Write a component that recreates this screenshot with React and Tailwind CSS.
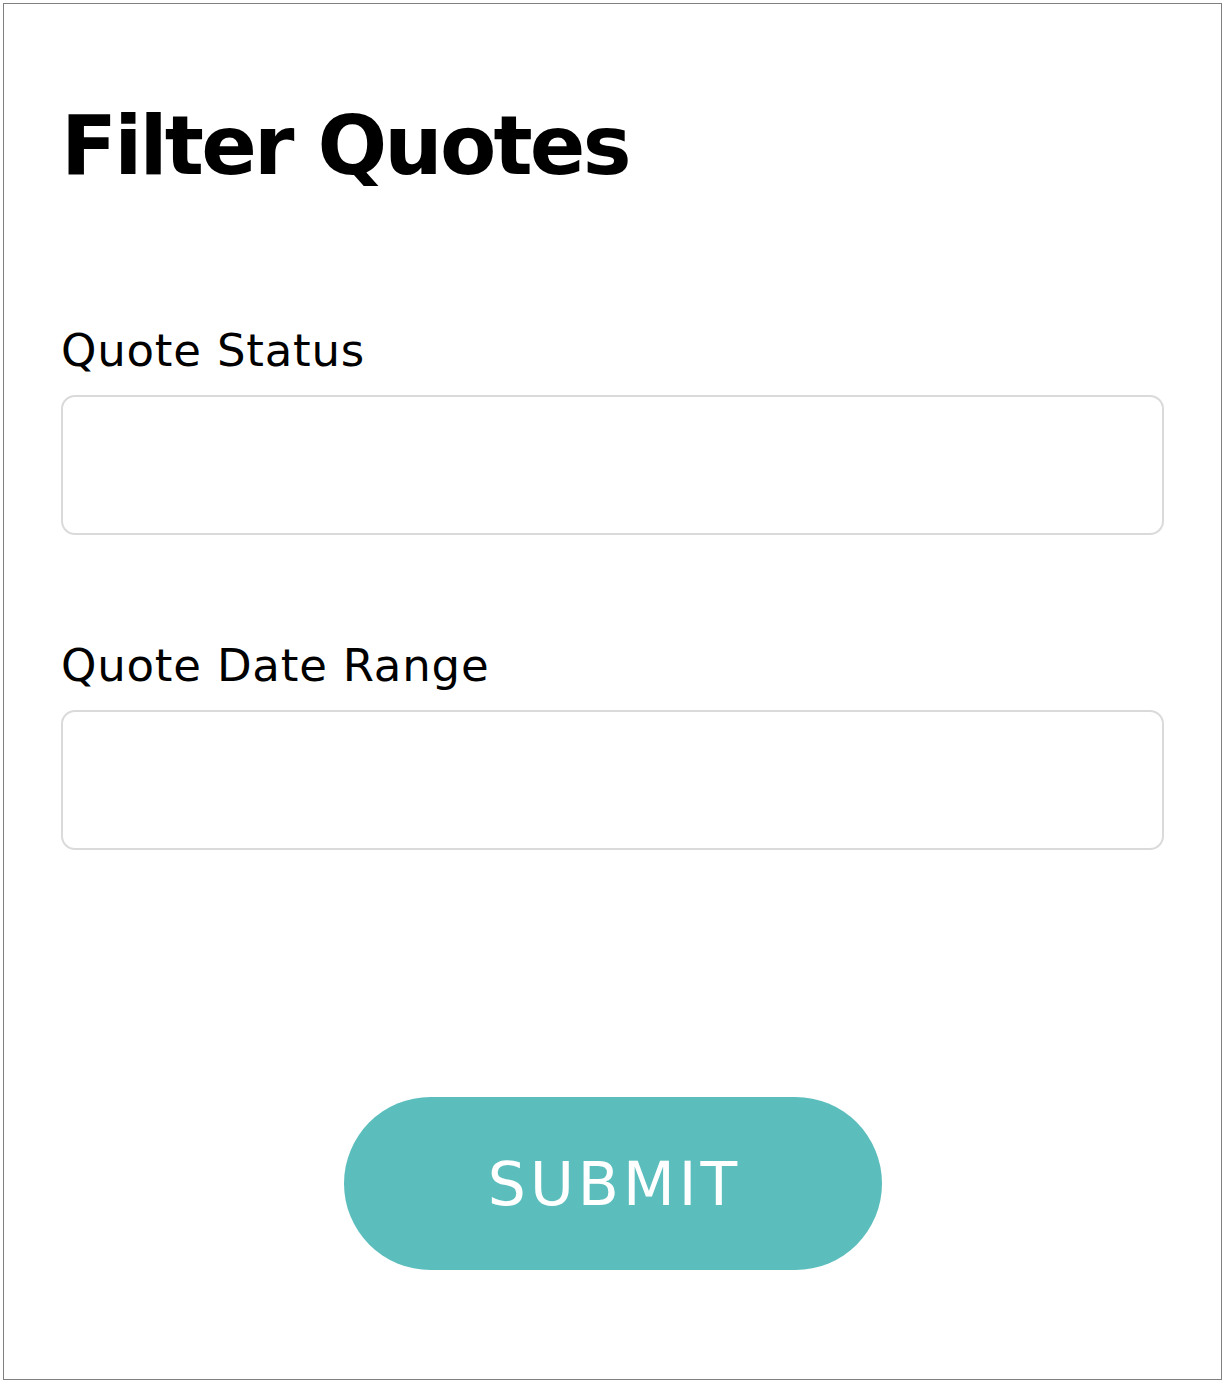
import React from 'react';

const font = { fontFamily: '"DejaVu Sans", sans-serif' };

function Field({ label, className }) {
    return (
        <div className={className}>
            <label className="block text-[45px] leading-none tracking-[0.8px] text-black">{label}</label>
            <div className="mt-[22px] h-[140px] w-full rounded-[14px] border-2 border-[#dadada] bg-white" />
        </div>
    );
}

export default function App() {
    return (
        <div className="bg-white p-[3px]" style={font}>
            <div className="flex h-[1377px] w-[1219px] flex-col border border-[#808080] px-[57px]">
                {/* Title */}
                <h1 className="mt-[101px] text-[82px] font-bold leading-none tracking-[-2.8px] text-black">Filter Quotes</h1>

                <Field label="Quote Status" className="mt-[141px]" />
                <Field label="Quote Date Range" className="mt-[108px]" />

                <div className="mt-[247px] flex justify-center">
                    <button className="flex h-[173px] w-[538px] items-center justify-center rounded-full bg-[#5bbebd] pl-[4px] text-[60px] leading-none tracking-[4px] text-white">
                        SUBMIT
                    </button>
                </div>
            </div>
        </div>
    );
}
